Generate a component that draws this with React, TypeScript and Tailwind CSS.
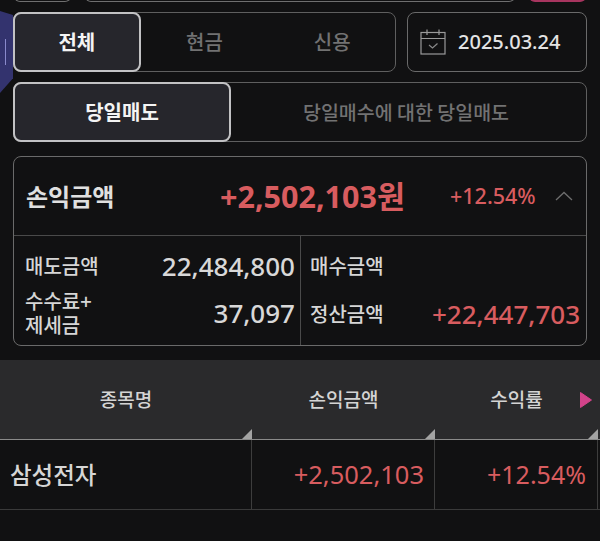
const font = "font-['Noto_Sans_CJK_KR','Noto_Sans',sans-serif]";
const numFont = "font-['Noto_Sans','Noto_Sans_CJK_KR',sans-serif]";

function CalendarIcon() {
  return (
    <svg width="26" height="26" viewBox="0 0 26 26" fill="none" stroke="#9a9a9a" strokeWidth="1.2">
      <rect x="1" y="3.5" width="24" height="21.5" />
      <path d="M1 9.5H25M7 0.5V6M19 0.5V6" />
      <path d="M9 16L12.5 19L17.5 14.5" stroke="#8a8a8a" />
    </svg>
  );
}

function Corner() {
  return <div className="absolute right-0 bottom-0 h-[10px] w-[10px] bg-[#a3a3a3] [clip-path:polygon(100%_0,100%_100%,0_100%)]" />;
}

export default function App() {
  return (
    <div className={`${font} relative h-[541px] w-[600px] overflow-hidden bg-[#111112]`}>
      {/* scrolled off row */}
      <div className="flex h-[12px] items-end gap-[14px] pl-[14px] pr-[14px]">
        <div className="mb-[10px] h-[10px] w-[57px] rounded-b-md border border-t-0 border-[#6f6f6f]" />
        <div className="mb-[10px] h-[10px] w-[432px] rounded-b-md border border-t-0 border-[#6f6f6f]" />
        <div className="mb-[10px] h-[10px] w-[57px] rounded-b-md border-2 border-t-0 border-[#a8355f]" />
      </div>

      <div className="flex gap-[11px] pl-[13px] pr-[13px]">
        <div className="flex h-[60px] w-[383px] rounded-lg border border-[#5f5f5f]">
          <div className="-m-px flex h-[60px] w-[128px] items-center justify-center rounded-lg border-2 border-[#c2c2c4] bg-[#26262c] text-[20px] font-bold text-[#f4f4f4]">
            전체
          </div>
          <div className="flex w-[128px] items-center justify-center pl-[2px] text-[20px] font-medium text-[#727272]">현금</div>
          <div className="flex w-[128px] items-center justify-center pl-[2px] text-[20px] font-medium text-[#727272]">신용</div>
        </div>
        <div className="flex h-[60px] w-[180px] items-center gap-[12px] rounded-lg border border-[#6a6a6a] pl-[12px]">
          <CalendarIcon />
          <span className={`${numFont} text-[20px] font-medium text-[#e4e4e4]`}>2025.03.24</span>
        </div>
      </div>

      <div className="ml-[13px] mt-[10px] flex h-[60px] w-[574px] rounded-lg border border-[#5f5f5f]">
        <div className="-m-px flex h-[60px] w-[218px] items-center justify-center rounded-lg border-2 border-[#c2c2c4] bg-[#26262c] text-[20px] font-bold text-[#f4f4f4]">
          당일매도
        </div>
        <div className="flex flex-1 items-center justify-center pl-[2px] pr-[6px] text-[19.5px] font-medium text-[#727272]">당일매수에 대한 당일매도</div>
      </div>

      <div className="ml-[13px] mt-[14px] h-[190px] w-[574px] rounded-lg border border-[#6a6a6a]">
        <div className="flex h-[79px] items-center border-b border-[#4a4a4a] pl-[12px]">
          <span className="w-[194px] text-[24px] font-bold text-[#e0e0e0]">손익금액</span>
          <span className="w-[198px] text-[30.5px] font-bold whitespace-nowrap text-[#d85c5f]">
            <span className={numFont}>+2,502,103</span>원
          </span>
          <span className={`${numFont} ml-[32px] w-[103px] text-[21.5px] font-medium text-[#d85c5f]`}>+12.54%</span>
          <svg width="18" height="10" viewBox="0 0 18 10" fill="none" stroke="#6e6e6e" strokeWidth="1.3" className="ml-[2px]">
            <path d="M1 9L9 1.5L17 9" />
          </svg>
        </div>
        <div className="flex h-[109px]">
          <div className="flex w-[287px] flex-col border-r border-[#4a4a4a] pl-[11px] pr-[5px]">
            <div className="flex h-[60px] items-center justify-between">
              <span className="text-[20px] font-medium text-[#d6d6d6]">매도금액</span>
              <span className={`${numFont} text-[26px] font-medium text-[#d8d8d8]`}>22,484,800</span>
            </div>
            <div className="-mt-[7px] flex h-[48px] items-center justify-between">
              <span className="text-[20px] leading-[24px] font-medium text-[#d6d6d6]">
                수수료+
                <br />
                제세금
              </span>
              <span className={`${numFont} text-[26px] font-medium text-[#d8d8d8]`}>37,097</span>
            </div>
          </div>
          <div className="flex flex-1 flex-col pl-[9px] pr-[6px]">
            <div className="flex h-[60px] items-center text-[20px] font-medium text-[#d6d6d6]">매수금액</div>
            <div className="flex h-[36px] items-center justify-between">
              <span className="text-[20px] font-medium text-[#d6d6d6]">정산금액</span>
              <span className={`${numFont} text-[26px] font-medium text-[#d85c5f]`}>+22,447,703</span>
            </div>
          </div>
        </div>
      </div>

      <div className="mt-[14px] flex h-[80px] border-b border-[#8a8a8a] bg-[#2a2a2c] text-[19px] font-medium text-[#d4d4d4]">
        <div className="relative flex w-[252px] items-center justify-center">
          종목명
          <Corner />
        </div>
        <div className="relative flex w-[183px] items-center justify-center">
          손익금액
          <Corner />
        </div>
        <div className="relative flex w-[163px] items-center justify-center">
          수익률
          <Corner />
          <svg width="14" height="18" viewBox="0 0 14 18" className="absolute right-[5px] top-[31px]">
            <path d="M1.5 1.5L12.5 9L1.5 16.5Z" fill="#d2438a" stroke="#d2438a" strokeLinejoin="round" />
          </svg>
        </div>
      </div>
      <div className="flex h-[70px] border-b border-[#3a3a3a]">
        <div className="flex w-[252px] items-center border-r border-[#3d3d3d] pl-[10px] text-[23.5px] font-medium text-[#d6d6d6]">삼성전자</div>
        <div className={`${numFont} flex w-[183px] items-center justify-end border-r border-[#3d3d3d] pr-[10px] text-[25.5px] text-[#d85c5f]`}>+2,502,103</div>
        <div className={`${numFont} flex w-[163px] items-center justify-end border-r border-[#3d3d3d] pr-[11px] text-[25px] text-[#d85c5f]`}>+12.54%</div>
      </div>

      {/* floating side handle */}
      <div className="absolute left-0 top-[11px] flex h-[82px] w-[13px] items-center bg-[#33336e] pl-[5px] [clip-path:polygon(0_0,100%_5%,100%_82%,0_100%)]">
        <div className="h-[26px] w-[1px] bg-[#8a8acc]" />
      </div>
    </div>
  );
}
